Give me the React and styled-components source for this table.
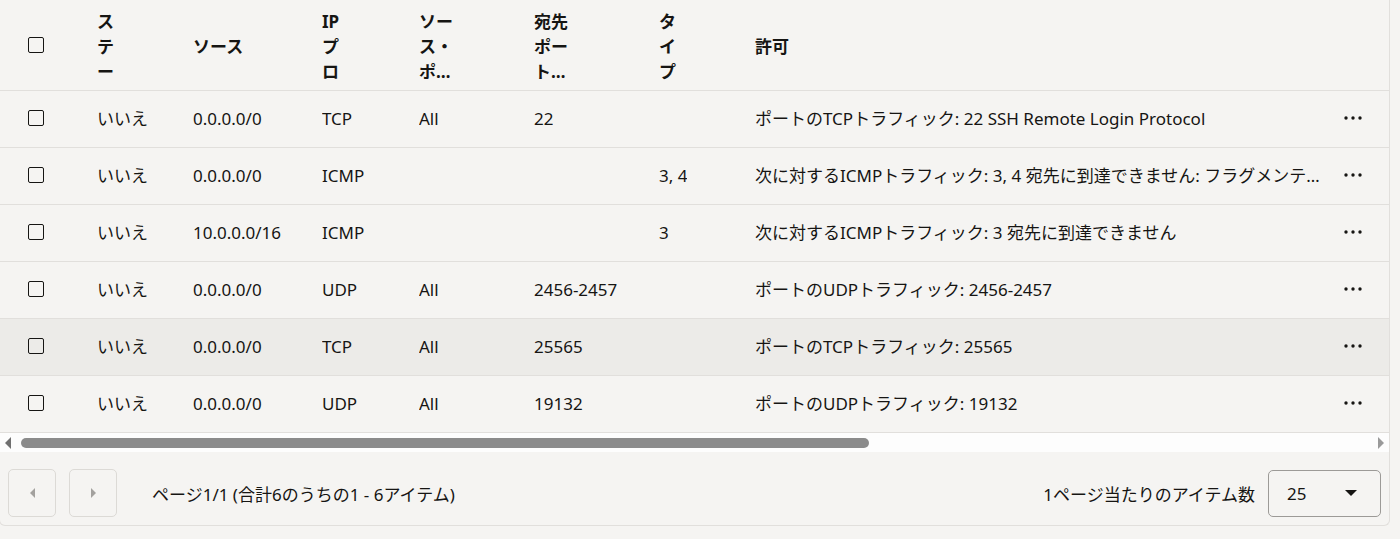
import React from "react";
import styled, { createGlobalStyle } from "styled-components";

const GlobalStyle = createGlobalStyle`
  html, body {
    margin: 0;
    padding: 0;
    background: #f5f4f2;
  }
  body {
    font-family: "Noto Sans", "Noto Sans CJK JP", sans-serif;
    color: #161513;
  }
`;

const COLUMNS = "81px 96px 129px 97px 115px 125px 96px 589px 61px";

const Panel = styled.div`
  width: 1389px;
  border-right: 1px solid #e1dfdc;
  border-bottom: 1px solid #e1dfdc;
  border-left: 1px solid #e1dfdc;
  border-radius: 0 0 6px 6px;
  margin-left: -1px;
  background: #f5f4f2;
`;

const Row = styled.div`
  display: grid;
  grid-template-columns: ${COLUMNS};
  height: ${(p) => (p.$header ? "90px" : "56px")};
  border-bottom: 1px solid #e1dfdc;
  background: ${(p) => (p.$active ? "#ecebe8" : "transparent")};
`;

const Cell = styled.div`
  display: flex;
  align-items: center;
  padding-left: ${(p) => (p.$check ? "28px" : "16px")};
  padding-right: ${(p) => (p.$clip ? "4px" : "0")};
  padding-bottom: ${(p) => (p.$header ? "0" : "2px")};
  font-size: 17px;
  font-weight: ${(p) => (p.$header ? 700 : 400)};
  line-height: 25px;
  white-space: nowrap;
  overflow: hidden;
  min-width: 0;
`;

const CellText = styled.span`
  overflow: hidden;
  text-overflow: ellipsis;
  white-space: nowrap;
  min-width: 0;
`;

const HeadLabel = styled.div`
  display: flex;
  flex-direction: column;
  padding-top: 3px;
`;

const Check = styled.span`
  display: inline-block;
  width: 14px;
  height: 14px;
  border: 1.5px solid #161513;
  border-radius: 2px;
`;

const Dots = styled.svg`
  display: block;
`;

const ScrollTrack = styled.div`
  display: flex;
  align-items: center;
  height: 19px;
  background: #fdfdfd;
  padding: 0 5px;
  gap: 10px;
`;

const ThumbArea = styled.div`
  flex: 1;
  height: 10px;
`;

const Thumb = styled.div`
  height: 10px;
  border-radius: 5px;
  background: #8b8b8b;
`;

const Footer = styled.div`
  display: flex;
  align-items: center;
  padding: 17px 8px 8px 8px;
`;

const PageButton = styled.button`
  width: 48px;
  height: 48px;
  margin-right: ${(p) => p.$gap || 0}px;
  border: 1px solid #dcdad6;
  border-radius: 5px;
  background: transparent;
  display: flex;
  align-items: center;
  justify-content: center;
  padding: 0;
`;

const PageInfo = styled.span`
  font-size: 17px;
  margin-left: 35px;
`;

const Spacer = styled.div`
  flex: 1;
`;

const PerPage = styled.span`
  font-size: 17px;
  margin-right: 13px;
`;

const Select = styled.div`
  width: 113px;
  height: 47px;
  border: 1px solid #9c9a97;
  border-radius: 5px;
  display: flex;
  align-items: center;
  justify-content: space-between;
  padding: 0 23px 0 18px;
  box-sizing: border-box;
  font-size: 17px;
`;

const Triangle = ({ dir, color, size = 6 }) => {
  const pts = {
    left: `${size},0 ${size},${size * 2} 0,${size}`,
    right: `0,0 0,${size * 2} ${size},${size}`,
  };
  if (dir === "down") {
    return (
      <svg width={size * 2} height={size} viewBox={`0 0 ${size * 2} ${size}`}>
        <polygon points={`0,0 ${size * 2},0 ${size},${size}`} fill={color} />
      </svg>
    );
  }
  return (
    <svg width={size} height={size * 2} viewBox={`0 0 ${size} ${size * 2}`}>
      <polygon points={pts[dir]} fill={color} />
    </svg>
  );
};

const headers = [
  ["ス", "テ", "ー"],
  ["ソース"],
  ["IP", "プ", "ロ"],
  ["ソー", "ス・", "ポ…"],
  ["宛先", "ポー", "ト…"],
  ["タ", "イ", "プ"],
  ["許可"],
];

const rules = [
  ["いいえ", "0.0.0.0/0", "TCP", "All", "22", "", "ポートのTCPトラフィック: 22 SSH Remote Login Protocol"],
  ["いいえ", "0.0.0.0/0", "ICMP", "", "", "3, 4", "次に対するICMPトラフィック: 3, 4 宛先に到達できません: フラグメンテーションが必要でDFが設定されています"],
  ["いいえ", "10.0.0.0/16", "ICMP", "", "", "3", "次に対するICMPトラフィック: 3 宛先に到達できません"],
  ["いいえ", "0.0.0.0/0", "UDP", "All", "2456-2457", "", "ポートのUDPトラフィック: 2456-2457"],
  ["いいえ", "0.0.0.0/0", "TCP", "All", "25565", "", "ポートのTCPトラフィック: 25565"],
  ["いいえ", "0.0.0.0/0", "UDP", "All", "19132", "", "ポートのUDPトラフィック: 19132"],
];

const MoreIcon = () => (
  <Dots width="18" height="4" viewBox="0 0 18 4">
    <circle cx="2" cy="2" r="1.7" fill="#161513" />
    <circle cx="9" cy="2" r="1.7" fill="#161513" />
    <circle cx="16" cy="2" r="1.7" fill="#161513" />
  </Dots>
);

export default function App() {
  const thumbRatio = 848 / 1347;
  return (
    <>
      <GlobalStyle />
      <Panel>
        <Row $header>
          <Cell $check $header>
            <Check />
          </Cell>
          {headers.map((lines, i) => (
            <Cell key={i} $header>
              <HeadLabel>
                {lines.map((l, j) => (
                  <span key={j}>{l}</span>
                ))}
              </HeadLabel>
            </Cell>
          ))}
          <Cell $header />
        </Row>
        {rules.map((r, i) => (
          <Row key={i} $active={i === 4}>
            <Cell $check>
              <Check />
            </Cell>
            {r.map((v, j) => (
              <Cell key={j} $clip={j === 6}>
                <CellText>{v}</CellText>
              </Cell>
            ))}
            <Cell>
              <MoreIcon />
            </Cell>
          </Row>
        ))}
        <ScrollTrack>
          <Triangle dir="left" color="#707070" size={6} />
          <ThumbArea>
            <Thumb style={{ width: `${thumbRatio * 100}%` }} />
          </ThumbArea>
          <Triangle dir="right" color="#9a9a9a" size={6} />
        </ScrollTrack>
        <Footer>
          <PageButton $gap={13}>
            <Triangle dir="left" color="#a3a19e" size={5} />
          </PageButton>
          <PageButton>
            <Triangle dir="right" color="#a3a19e" size={5} />
          </PageButton>
          <PageInfo>ページ1/1 (合計6のうちの1 - 6アイテム)</PageInfo>
          <Spacer />
          <PerPage>1ページ当たりのアイテム数</PerPage>
          <Select>
            <span>25</span>
            <Triangle dir="down" color="#161513" size={6} />
          </Select>
        </Footer>
      </Panel>
    </>
  );
}
